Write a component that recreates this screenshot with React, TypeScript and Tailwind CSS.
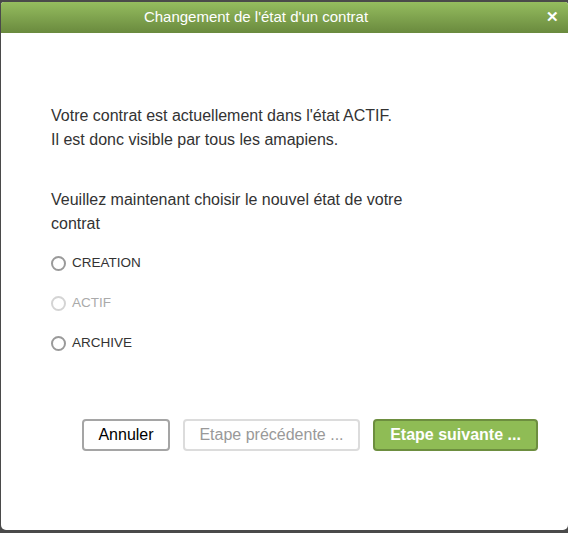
export default function App() {
  return (
    <div className="w-[568px] h-[533px] bg-[#4a4a4a] pt-[2px] pl-[1px] pb-[3px]" style={{ fontFamily: '"Liberation Sans", Arial, sans-serif' }}>
      <div className="h-[528px] bg-white rounded-t-[3px] rounded-b-[5px] flex flex-col overflow-hidden">
        <div className="h-[31px] bg-gradient-to-b from-[#95bd5f] to-[#6a8a3e] flex items-center relative">
          <div className="w-[510px] text-center text-white text-[15px]">Changement de l'état d'un contrat</div>
          <div className="absolute right-[9px] top-[7px] text-white text-[15px] font-bold leading-none">✕</div>
        </div>
        <div className="pl-[50px] pt-[71px] text-[#333] text-[16px] leading-[24px]">
          <p>Votre contrat est actuellement dans l'état ACTIF.<br />Il est donc visible par tous les amapiens.</p>
          <p className="mt-[36px] w-[370px]">Veuillez maintenant choisir le nouvel état de votre contrat</p>
          <div className="mt-[7px] flex flex-col text-[13.5px]">
            {[
              { l: 'CREATION', d: false },
              { l: 'ACTIF', d: true },
              { l: 'ARCHIVE', d: false },
            ].map((r) => (
              <div key={r.l} className="h-[40px] flex items-center gap-[6px]">
                <span className={`w-[15px] h-[15px] rounded-full border-2 bg-white ${r.d ? 'border-[#d4d4d4]' : 'border-[#9a9a9a]'}`} />
                <span className={r.d ? 'text-[#aaa]' : 'text-[#333]'}>{r.l}</span>
              </div>
            ))}
          </div>
          <div className="mt-[56px] flex gap-[13px] pl-[31px]">
            <div className="w-[88px] h-[32px] rounded-[4px] border-2 border-[#a5a5a5] flex items-center justify-center text-[16px] text-black">Annuler</div>
            <div className="w-[177px] h-[32px] rounded-[4px] border-2 border-[#dcdcdc] flex items-center justify-center text-[16px] text-[#999]">Etape précédente ...</div>
            <div className="w-[165px] h-[32px] rounded-[4px] border-2 border-[#6d8e3f] bg-[#8fbc55] flex items-center justify-center text-[16px] font-bold text-white">Etape suivante ...</div>
          </div>
        </div>
      </div>
    </div>
  );
}
